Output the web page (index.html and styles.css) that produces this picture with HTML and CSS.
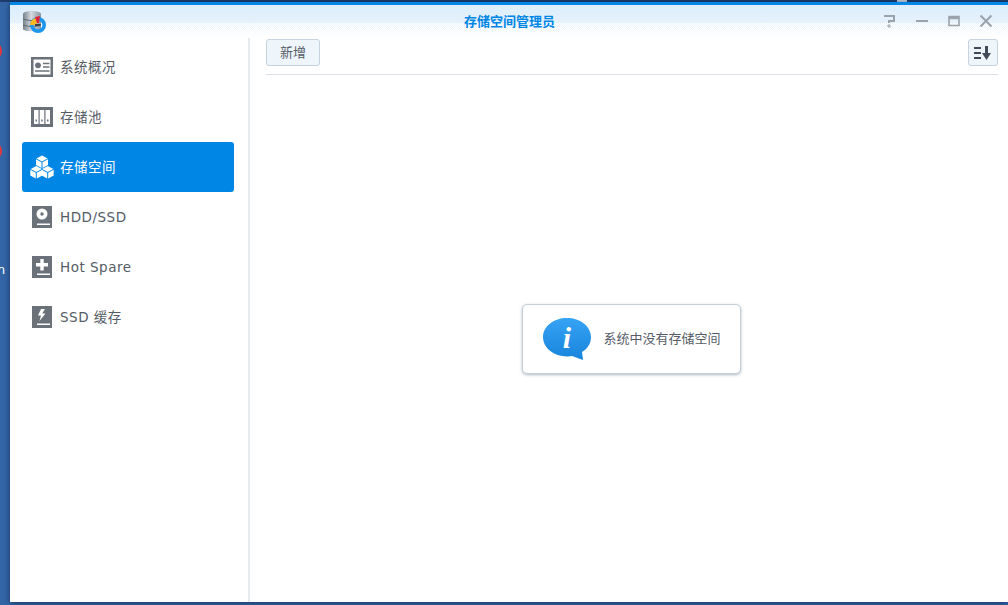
FILE: index.html
```html
<!DOCTYPE html>
<html lang="zh-CN">
  <head>
    <meta charset="UTF-8" />
    <meta name="viewport" content="width=device-width, initial-scale=1.0" />
    <title>存储空间管理员</title>

    <link rel="stylesheet" href="styles.css">
  </head>
  <body>
    <div class="desk-bar"><span class="desk-bar-mark"></span></div>
    <span class="desk-badge desk-badge-top"></span>
    <span class="desk-badge desk-badge-bottom"></span>
    <span class="desk-letter">n</span>

    <div class="window">
      <header class="window-head">
        <svg class="app-icon" width="23" height="22" viewBox="0 0 23 22">
          <defs>
            <linearGradient id="drum" x1="0" x2="1" y1="0" y2="0">
              <stop offset="0" stop-color="#74818d" />
              <stop offset="0.45" stop-color="#d5dadf" />
              <stop offset="1" stop-color="#8a95a0" />
            </linearGradient>
          </defs>
          <path d="M0 3c0-4 18-4 18 0v15c0 3-18 3-18 0z" fill="url(#drum)" />
          <path d="M0 8c5 2 13 2 18 0M0 14c5 2 13 2 18 0" stroke="#5b6670" fill="none" />
          <circle cx="15" cy="14" r="6.2" fill="none" stroke="#1b95ee" stroke-width="3.6" />
          <path d="M7 14c0-3 2-6 6-7l1 6-3 1z" fill="#f5b820" />
          <path d="M12 6l5-1-1 7h-2z" fill="#e3203a" />
          <path d="M12 13h6l-1 2h-5z" fill="#39424b" />
        </svg>
        <h1 class="window-title">存储空间管理员</h1>
        <div class="window-tools">
          <svg width="14" height="14" viewBox="0 0 14 14" fill="none" stroke="#9aa2ab" stroke-width="2">
            <path d="M1 2h10v5H6v2" />
            <path d="M5 11h2v2H5z" stroke-width="1" />
          </svg>
          <svg width="14" height="14" viewBox="0 0 14 14" fill="none" stroke="#9aa2ab" stroke-width="2">
            <path d="M1 7h12" />
          </svg>
          <svg width="14" height="14" viewBox="0 0 14 14" fill="none" stroke="#9aa2ab">
            <path d="M2 2.500h10v9H2z" stroke-width="1.600" />
            <path d="M2 4h10" stroke-width="2.400" />
          </svg>
          <svg width="14" height="14" viewBox="0 0 14 14" fill="none" stroke="#9aa2ab" stroke-width="2">
            <path d="M1.500 1.500l11 11M12.500 1.500l-11 11" />
          </svg>
        </div>
      </header>

      <div class="window-body">
        <nav class="side">
          <a class="side-item">
            <svg class="side-icon" width="24" height="24" viewBox="0 0 24 24" fill="#6b7179">
              <path fill-rule="evenodd" d="M1 2h22v20H1zM3.500 4.500v15h17v-15z" />
              <circle cx="8" cy="10.300" r="2.900" />
              <path d="M13 7.800h6.500v1.500H13zM13 11.300h6.500v1.500H13zM5 15.200h14.500v1.500H5z" />
            </svg>
            <span class="side-label">系统概况</span>
          </a>
          <a class="side-item">
            <svg class="side-icon" width="24" height="24" viewBox="0 0 24 24" fill="#6b7179">
              <path fill-rule="evenodd" d="M1 2h22v20H1zM4 5v14h4.500V5zM9.700 5v14h4.600V5zM15.500 5v14H20V5z" />
              <path d="M5.500 14.500h1.500v2H5.500zM11.200 14.500h1.500v2h-1.500zM17 14.500h1.500v2H17z" />
            </svg>
            <span class="side-label">存储池</span>
          </a>
          <a class="side-item side-item-active">
            <svg class="side-icon" width="24" height="24" viewBox="0 0 24 24" fill="#fff">
              <defs>
                <g id="cube">
                  <path d="M0 0l5.600 3L0 6l-5.600-3z" />
                  <path d="M-6 3.800l5.500 3v5.700l-5.500-3zM6 3.800L.5 6.800v5.700l5.500-3z" />
                </g>
              </defs>
              <use href="#cube" x="12" y="0.500" />
              <use href="#cube" x="6.300" y="11" />
              <use href="#cube" x="17.700" y="11" />
            </svg>
            <span class="side-label">存储空间</span>
          </a>
          <a class="side-item">
            <svg class="side-icon" width="24" height="24" viewBox="0 0 24 24" fill="#6b7179">
              <path fill-rule="evenodd" d="M2 1h20v22H2zM12 3.500a5.500 5.500 0 1 0 0 11 5.500 5.500 0 0 0 0-11zM7 18.500V20h13v-1.500z" />
              <circle cx="12" cy="9" r="1.700" />
            </svg>
            <span class="side-label">HDD/SSD</span>
          </a>
          <a class="side-item">
            <svg class="side-icon" width="24" height="24" viewBox="0 0 24 24" fill="#6b7179">
              <path fill-rule="evenodd" d="M2 1h20v22H2zM10.300 4v4H6v3.500h4.300v4h3.400v-4H18V8h-4.300V4zM7 18.500V20h13v-1.500z" />
            </svg>
            <span class="side-label">Hot Spare</span>
          </a>
          <a class="side-item">
            <svg class="side-icon" width="24" height="24" viewBox="0 0 24 24" fill="#6b7179">
              <path fill-rule="evenodd" d="M2 1h20v22H2zM11 4L8 10.500h3L9.500 16l6-7.500h-3.300L15 4zM7 18.500V20h13v-1.500z" />
            </svg>
            <span class="side-label">SSD 缓存</span>
          </a>
        </nav>

        <main class="main">
          <div class="toolbar">
            <button class="btn btn-add">新增</button>
            <button class="btn btn-sort">
              <svg width="18" height="14" viewBox="0 0 18 14" fill="#414b57">
                <path d="M0 1h7v2H0zM0 6h7v2H0zM0 11h7v2H0zM11 0h3v7h3l-4.500 7L8 7h3z" />
              </svg>
            </button>
          </div>
          <div class="empty">
            <div class="notice">
              <svg class="notice-icon" width="48" height="43" viewBox="0 0 48 43">
                <defs>
                  <linearGradient id="bubble" x1="0" x2="0" y1="0" y2="1">
                    <stop offset="0" stop-color="#36a3f5" />
                    <stop offset="1" stop-color="#1784dc" />
                  </linearGradient>
                </defs>
                <path d="M24 0c13 0 24 8 24 19 0 7-4 12-9 15l1 8-11-4c-2 .3-3 .4-5 .4C11 38.400 0 30 0 19S11 0 24 0z" fill="url(#bubble)" />
                <text class="notice-i" x="24" y="30" text-anchor="middle">i</text>
              </svg>
              <span class="notice-text">系统中没有存储空间</span>
            </div>
          </div>
        </main>
      </div>
    </div>
  </body>
</html>
```

FILE: styles.css
```css
:root {
  --desk: #3466a7;
  --blue: #0086e5;
  --text: #555c66;
  --line: #dcdfe8;
  --btn-border: #c6d2de;
}

* {
  margin: 0;
  padding: 0;
  box-sizing: border-box;
}

body {
  position: relative;
  width: 1008px;
  height: 605px;
  overflow: hidden;
  background: var(--desk);
  font-family: "Noto Sans CJK SC", "DejaVu Sans", sans-serif;
  font-size: 13px;
  color: var(--text);
}

.desk-bar {
  position: absolute;
  top: 0;
  left: 0;
  width: 100%;
  height: 2px;
  background: #1c3d6e;
}

.desk-bar-mark {
  position: absolute;
  left: 897px;
  top: 0;
  width: 10px;
  height: 2px;
  background: #c9d3de;
}

.desk-badge {
  position: absolute;
  left: -8px;
  width: 10px;
  height: 14px;
  border-radius: 50%;
  background: #e0383c;
}

.desk-badge-top {
  top: 44px;
}

.desk-badge-bottom {
  top: 144px;
}

.desk-letter {
  position: absolute;
  top: 262px;
  left: -3px;
  font-family: "DejaVu Sans", sans-serif;
  font-size: 13px;
  color: #fff;
}

.window {
  position: relative;
  display: flex;
  flex-direction: column;
  width: 998px;
  height: 600px;
  margin: 2px 0 0 10px;
  background: #fff;
  border-top: 3px solid var(--blue);
  box-shadow: 0 1px 6px rgba(10, 30, 70, 0.7);
}

.window-head {
  position: relative;
  z-index: 0;
  display: flex;
  align-items: center;
  justify-content: center;
  flex: 0 0 33px;
  padding: 0 0 2px 1px;
  background: linear-gradient(#dcedfb 0, #e6f2fc 18px, #fff 33px);
}

/* dithered lower half of the title bar */
.window-head::after {
  position: absolute;
  left: 0;
  bottom: 0;
  z-index: -1;
  width: 100%;
  height: 15px;
  background: repeating-conic-gradient(#fff 0 25%, transparent 0 50%) 0 0 / 2px 2px;
  content: '';
}

.app-icon {
  position: absolute;
  left: 13px;
  top: 6px;
}

.window-title {
  font-size: 13px;
  font-weight: 700;
  color: var(--blue);
}

.window-tools {
  position: absolute;
  right: 15px;
  top: 9px;
  display: flex;
  gap: 18px;
}

.window-body {
  display: flex;
  flex: 1;
  min-height: 0;
}

.side {
  display: flex;
  flex-direction: column;
  flex: 0 0 240px;
  padding: 4px 14px 0 12px;
  border-right: 2px solid #e7eaec;
}

.side-item {
  display: flex;
  align-items: center;
  gap: 6px;
  height: 50px;
  padding-left: 8px;
  border-radius: 3px;
  font-family: "DejaVu Sans", "Noto Sans CJK SC", sans-serif;
  font-size: 13.5px;
  letter-spacing: 0.5px;
  color: var(--text);
}

.side-label {
  line-height: 18px;
  padding-bottom: 1px;
}

.side-item-active {
  background: var(--blue);
  color: #fff;
}

.main {
  display: flex;
  flex-direction: column;
  flex: 1;
  padding: 0 10px 0 16px;
}

.toolbar {
  display: flex;
  justify-content: space-between;
  align-items: flex-start;
  height: 37px;
  padding-top: 1px;
  border-bottom: 1px solid var(--line);
}

.btn {
  display: flex;
  align-items: center;
  justify-content: center;
  height: 27px;
  border: 1px solid var(--btn-border);
  border-radius: 3px;
  background: #eef5fb;
  font-family: inherit;
  font-size: 13px;
  color: var(--text);
}

.btn-add {
  width: 54px;
  padding-bottom: 2px;
}

.btn-sort {
  width: 30px;
}

.empty {
  display: flex;
  flex: 1;
  align-items: center;
  justify-content: center;
  padding-right: 2px;
}

.notice {
  display: flex;
  align-items: center;
  gap: 13px;
  width: 219px;
  height: 70px;
  padding: 0 20px;
  border: 1px solid #c3ced6;
  border-radius: 5px;
  background: #fff;
  box-shadow: 0 1px 3px rgba(100, 120, 150, 0.5);
}

.notice-icon {
  flex: none;
  margin-top: 1px;
}

.notice-i {
  font-family: "Liberation Serif", serif;
  font-size: 30px;
  font-style: italic;
  font-weight: 700;
  fill: #fff;
}

.notice-text {
  font-size: 13px;
  line-height: 18px;
  padding-bottom: 1px;
  white-space: nowrap;
}
```
